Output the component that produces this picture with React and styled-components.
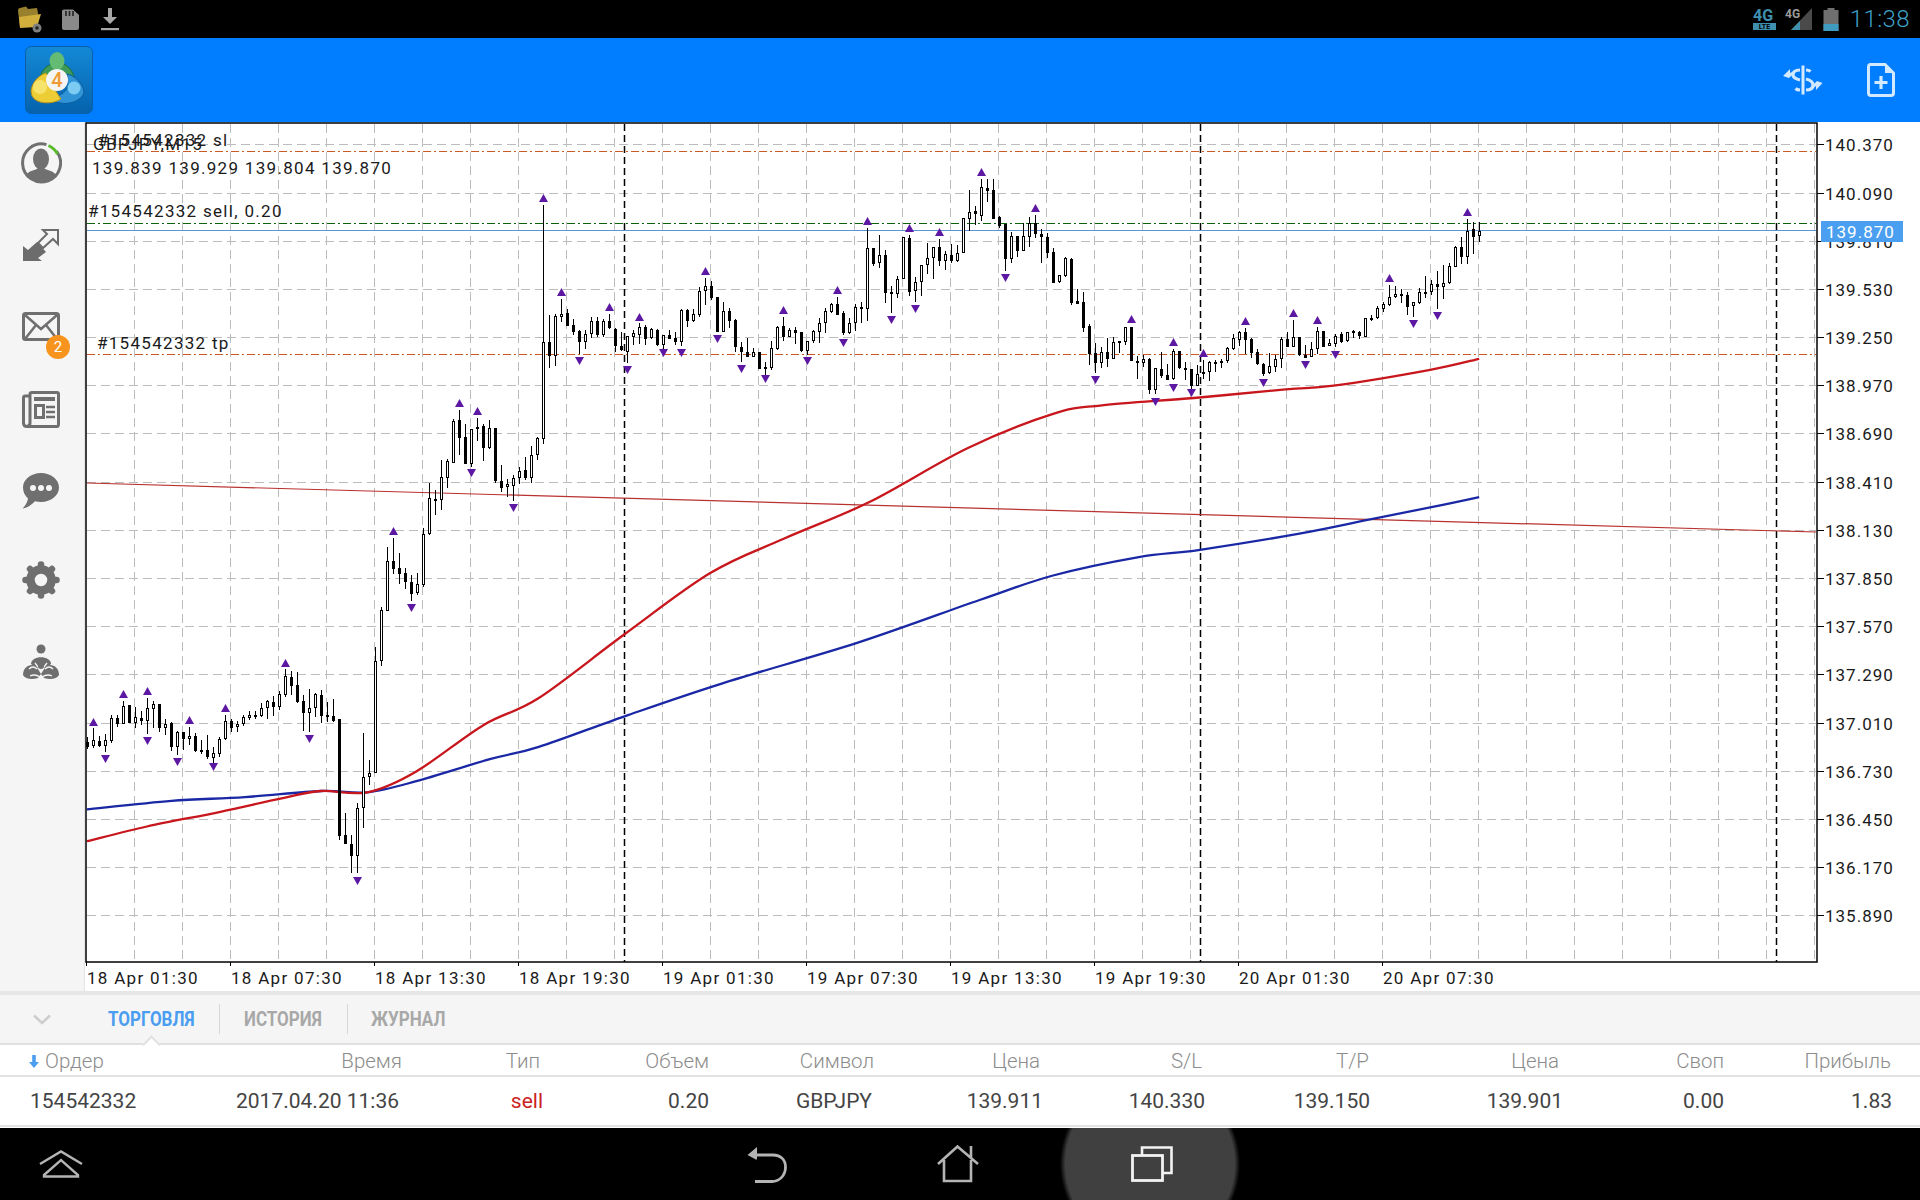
import React from "react";
import styled, { createGlobalStyle } from "styled-components";

// candles read off the chart: [black?, body top, body bottom, wick top, wick bottom]
// y values are kept in 1/3 px from a base line per group
const groups = [
  { from: 0, y0: 660, rows: [
    [1,247,262,230,268],[0,240,258,205,265],[1,243,258,228,262],[0,240,258,222,275],[0,175,243,165,250],[1,175,191,165,200],
    [0,138,191,123,191],[1,135,188,135,188],[0,172,188,140,205],[1,175,182,153,195],[0,145,182,113,222],[0,132,146,122,205],
    [1,132,205,132,215],[0,192,205,178,225],[1,190,260,185,272],[0,215,260,212,285],[1,216,236,216,270],[0,229,236,200,255],
    [1,228,273,220,276],[1,270,272,240,283],[1,270,291,225,297],[0,280,293,262,310],[0,237,281,232,290],[0,184,238,165,240],
    [1,184,203,176,215],[0,193,200,182,215],[0,172,193,165,198],[0,166,173,153,180],[1,166,170,152,177],[0,145,167,128,172],
    [0,124,145,120,177],[1,127,140,107,168],[0,102,140,92,150],[0,48,104,28,110],[1,52,77,33,106],[1,75,125,37,130],
    [1,123,160,105,212],[0,145,160,87,215],[0,102,143,100,172],[1,105,167,90,190],[1,165,168,125,185],[1,167,183,117,185],
    [1,178,527,178,540],[1,525,552,460,552],[1,552,587,525,638],[0,445,587,430,640],[0,352,443,220,503],[0,340,350,300,375],
  ]},
  { from: 48, y0: 390, rows: [
    [0,813,1149,772,1149],[0,660,812,652,828],[0,514,662,472,662],[1,513,537,445,552],[1,534,552,490,582],[1,550,576,535,597],
    [1,576,612,556,633],[0,583,610,550,615],[0,433,585,415,590],[0,325,432,280,435],[1,327,332,300,375],[0,262,329,210,360],
    [0,213,263,208,293],[0,94,218,87,218],[1,90,144,60,195],[1,141,221,102,221],[0,118,222,118,230],[0,112,118,85,152],
    [1,108,173,102,213],[0,114,174,90,178],[1,114,272,114,280],[1,273,293,225,305],[0,283,290,267,320],[0,265,287,255,332],
    [0,243,265,232,282],[1,240,264,202,270],[0,195,265,168,278],[0,144,194,142,210],
  ]},
  { from: 76, y0: 180, rows: [
    [0,485,776,75,792],[1,485,527,405,563],[0,408,527,403,558],[0,403,410,357,425],[1,400,437,388,437],[1,435,457,418,465],
    [1,453,485,450,522],[0,463,485,450,507],[0,423,463,412,475],[1,423,465,412,470],[0,423,465,418,472],[1,423,445,403,447],
    [1,447,498,445,515],[1,497,510,457,512],[0,469,515,469,548],[0,460,470,450,495],[0,441,464,430,492],[1,441,476,436,495],
    [0,447,474,445,478],[1,450,495,448,498],[0,466,495,464,510],[1,466,476,450,476],[1,475,485,457,495],[0,390,485,388,497],
    [1,391,422,388,440],[0,403,424,388,425],[0,333,405,320,410],[0,319,334,295,375],[1,319,353,303,360],[1,352,455,350,455],
    [0,394,455,366,455],[1,394,422,385,443],[1,420,500,418,515],[1,500,515,487,545],[1,515,530,475,530],[0,517,530,505,530],
    [1,517,566,517,566],[1,562,566,545,590],[0,505,565,483,570],[0,440,507,438,510],[1,438,472,410,483],[0,451,470,445,472],
    [1,451,458,442,492],[1,456,512,455,515],[0,482,512,482,525],[0,454,482,450,490],[0,430,455,415,490],
  ]},
  { from: 123, y0: 150, rows: [
    [0,484,518,475,548],[0,462,485,460,490],[1,463,495,442,495],[1,490,548,483,556],[0,520,548,503,552],[0,472,520,463,542],
    [1,472,478,455,518],[0,295,476,235,512],[1,295,342,295,348],[0,316,340,255,355],[1,316,428,300,458],[1,426,431,408,488],
    [0,388,431,378,443],[0,262,388,262,388],[1,265,425,255,437],[0,397,424,380,455],[0,346,397,345,437],[0,325,346,280,372],
    [0,292,325,290,387],[1,292,332,268,347],[0,313,334,303,360],[1,316,332,283,338],[0,308,332,285,335],[0,203,310,203,310],
    [0,187,206,120,242],[1,184,193,168,225],[0,112,197,87,213],[1,114,122,87,155],[1,120,206,88,206],[1,201,227,198,235],
    [1,223,326,223,362],[0,259,326,247,338],[1,259,302,257,320],[0,259,302,220,302],[0,220,260,200,290],[1,220,252,195,263],
    [1,253,262,238,338],[1,262,308,250,323],[1,306,398,295,398],[0,376,396,376,398],[0,324,378,322,380],[1,327,458,325,465],
    [1,454,461,418,461],[1,457,533,427,546],[1,527,612,523,644],[1,610,638,580,668],[0,607,638,592,653],[1,607,626,565,652],
    [0,577,626,560,626],[0,574,580,574,608],[0,532,575,530,585],[1,532,632,532,632],[1,633,637,617,687],[0,628,640,615,650],
    [1,627,720,625,733],[0,655,720,655,733],[1,657,677,605,685],[1,675,690,643,690],[0,603,687,597,690],[1,603,655,603,657],
    [1,655,659,636,690],[1,657,707,657,720],[0,672,707,645,707],[1,667,671,630,688],
  ]},
  { from: 187, y0: 290, rows: [
    [0,216,247,212,272],[1,215,218,210,247],[1,213,216,207,233],[0,174,213,172,218],[0,144,177,132,180],[0,127,149,122,168],
    [1,127,150,115,192],[1,147,188,145,204],[1,187,223,178,224],[1,222,252,220,258],[0,229,250,190,252],[0,207,230,195,245],
    [0,147,207,140,233],[1,148,170,125,170],[0,142,170,90,170],[1,142,196,140,198],[1,196,203,166,203],[0,178,200,155,200],
    [0,124,178,112,192],[1,124,170,124,170],[0,160,167,148,168],[0,137,161,133,172],[1,133,156,127,158],[0,127,154,125,155],
    [1,124,128,120,143],[1,126,138,123,146],[0,85,140,85,140],[0,83,89,75,92],[0,54,84,47,87],[0,42,56,37,65],
  ]},
  { from: 217, y0: 200, rows: [
    [0,291,316,255,318],[0,283,292,258,293],[1,283,287,268,308],[1,285,320,277,345],[0,307,317,305,350],[0,277,308,265,312],
    [1,277,279,228,293],[0,252,277,240,285],[1,253,260,212,327],[0,250,260,195,297],[0,199,250,190,252],[0,142,200,137,200],
    [1,142,170,110,192],[0,92,170,57,193],[1,88,112,65,162],[0,94,109,65,125],
  ]},
];

const candles = groups.flatMap((g) =>
  g.rows.map(([black, top, bot, wTop, wBot], n) => ({
    x: 87 + 6 * (g.from + n),
    black: !!black,
    top: Math.round(g.y0 + top / 3),
    bot: Math.round(g.y0 + bot / 3),
    wTop: Math.round(g.y0 + wTop / 3),
    wBot: Math.round(g.y0 + wBot / 3),
  }))
);

const upArrows = [[1,722],[6,694],[10,691],[17,720],[23,708],[33,663],[51,531],[62,403],[65,411],[76,198],[79,292],[87,307],[92,317],[103,271],[116,310],[125,290],[130,221],[137,228],[142,232],[149,172],[158,208],[174,319],[181,342],[186,353],[193,321],[201,313],[205,320],[217,278],[230,212]];
const downArrows = [[3,759],[10,741],[15,762],[21,767],[37,739],[45,881],[54,608],[64,473],[71,508],[82,361],[90,370],[96,353],[99,353],[105,339],[109,369],[113,379],[120,361],[126,343],[134,320],[138,309],[153,278],[168,380],[178,402],[181,388],[184,393],[196,383],[203,365],[208,355],[221,324],[225,316]];

// smooth line through points given in the shrunk picture's scale
const smoothPath = (pts) => {
  const p = pts.map(([x, y]) => [x * 1.2245, y * 1.2245]);
  let d = `M${p[0][0].toFixed(1)} ${p[0][1].toFixed(1)}`;
  for (let i = 0; i < p.length - 1; i++) {
    const a = p[i - 1] || p[i];
    const b = p[i];
    const c = p[i + 1];
    const e = p[i + 2] || c;
    const c1 = [b[0] + (c[0] - a[0]) / 6, b[1] + (c[1] - a[1]) / 6];
    const c2 = [c[0] - (e[0] - b[0]) / 6, c[1] - (e[1] - b[1]) / 6];
    d += ` C${c1[0].toFixed(1)} ${c1[1].toFixed(1)} ${c2[0].toFixed(1)} ${c2[1].toFixed(1)} ${c[0].toFixed(1)} ${c[1].toFixed(1)}`;
  }
  return d;
};
const redMa = smoothPath([[71,687],[120,675],[180,663],[230,652],[262,646],[300,647],[340,630],[395,592],[440,570],[510,518],[580,468],[640,440],[710,410],[790,366],[860,338],[900,331],[975,325],[1050,318],[1089,315],[1168,302],[1208,293]]);
const blueMa = smoothPath([[71,661],[140,654],[200,651],[262,646],[300,647],[340,638],[400,620],[440,610],[510,585],[590,558],[700,525],[800,490],[860,470],[930,455],[980,449],[1060,436],[1120,424],[1170,414],[1208,406]]);

const prices = ["140.370","140.090","139.810","139.530","139.250","138.970","138.690","138.410","138.130","137.850","137.570","137.290","137.010","136.730","136.450","136.170","135.890"];
const times = ["18 Apr 01:30","18 Apr 07:30","18 Apr 13:30","18 Apr 19:30","19 Apr 01:30","19 Apr 07:30","19 Apr 13:30","19 Apr 19:30","20 Apr 01:30","20 Apr 07:30"];
const gridXs = Array.from({ length: 36 }, (_, i) => 134.5 + 48 * i);
const gridY = (i) => Math.round(144.4 + 48.18 * i) + 0.5;

const columns = [
  { title: "Время", value: "2017.04.20 11:36", w: 222, vp: 3 },
  { title: "Тип", value: "sell", w: 141, hp: 3, sell: true },
  { title: "Объем", value: "0.20", w: 166 },
  { title: "Символ", value: "GBPJPY", w: 165, vp: 2 },
  { title: "Цена", value: "139.911", w: 169, hp: 3 },
  { title: "S/L", value: "140.330", w: 162, hp: 3 },
  { title: "T/P", value: "139.150", w: 165, hp: 1 },
  { title: "Цена", value: "139.901", w: 193, hp: 4 },
  { title: "Своп", value: "0.00", w: 161 },
  { title: "Прибыль", value: "1.83", w: 168, hp: 1 },
];
const tableGrid = `180px ${columns.map((c) => c.w + "px").join(" ")}`;

const GlobalStyle = createGlobalStyle`
  html, body { margin: 0; padding: 0; background: #fff; overflow: hidden; }
  * { box-sizing: border-box; }
  body { font-family: Roboto, "Liberation Sans", sans-serif; }
`;

const Screen = styled.div`
  width: 1920px;
  height: 1200px;
  display: flex;
  flex-direction: column;
`;

const StatusBar = styled.div`
  height: 38px;
  background: #000;
  display: flex;
  align-items: center;
  padding: 0 10px 0 17px;
`;
const StatusLeft = styled.div`
  display: flex;
  align-items: center;
  gap: 19px;
`;
const StatusRight = styled.div`
  margin-left: auto;
  display: flex;
  align-items: center;
  gap: 8px;
`;
const Clock = styled.span`
  font-size: 24px;
  font-weight: 300;
  color: #3f9fc4;
  margin-left: 3px;
  letter-spacing: 0.4px;
`;

const Toolbar = styled.div`
  height: 84px;
  background: #007eff;
  display: flex;
  align-items: center;
  padding: 0 25px;
`;
const ToolbarActions = styled.div`
  margin-left: auto;
  display: flex;
  align-items: center;
  gap: 44px;
`;

const Main = styled.div`
  height: 869px;
  display: flex;
`;
const Sidebar = styled.div`
  width: 85px;
  background: #f5f5f5;
  border-right: 1px solid #e4e4e4;
  display: flex;
  flex-direction: column;
`;
const SideSlot = styled.div`
  position: relative;
  height: 82px;
  margin-top: ${(p) => p.$mt || 0}px;
  display: flex;
  align-items: center;
  justify-content: center;
  padding-right: 2px;
`;
const Badge = styled.span`
  position: absolute;
  left: 46px;
  top: 49px;
  width: 24px;
  height: 24px;
  border-radius: 50%;
  background: #f7941d;
  color: #fff;
  font-size: 15px;
  display: flex;
  align-items: center;
  justify-content: center;
`;

const ChartSvg = styled.svg`
  display: block;
  width: 1835px;
  height: 869px;
  background: #fff;
`;
const ChartText = styled.text`
  font-family: Roboto, "Liberation Sans", sans-serif;
  font-size: 17px;
  letter-spacing: ${(p) => p.$ls || 1.3}px;
  fill: ${(p) => p.$fill || "#1a1a1a"};
`;

const TabBar = styled.div`
  position: relative;
  height: 54px;
  background: #f5f5f5;
  border-top: 4px solid #e6e6e6;
  border-bottom: 2px solid #e0e0e0;
  display: flex;
  align-items: center;
`;
const Chevron = styled.div`
  width: 108px;
  padding-left: 33px;
  display: flex;
  align-items: center;
`;
const Tab = styled.div`
  width: ${(p) => p.$w}px;
  height: 30px;
  margin-left: ${(p) => p.$ml || 0}px;
  display: flex;
  align-items: center;
  border-right: ${(p) => (p.$sep ? "1px solid #d8d8d8" : "none")};
`;
const TabLabel = styled.span`
  display: inline-block;
  font-size: 20px;
  font-weight: 700;
  white-space: nowrap;
  transform: scaleX(0.85);
  transform-origin: left center;
  color: ${(p) => (p.$active ? "#4a9df0" : "#a8a8a8")};
`;
const Notch = styled.span`
  position: absolute;
  left: 145px;
  bottom: -8px;
  width: 13px;
  height: 13px;
  background: #fff;
  border-top: 2px solid #e0e0e0;
  border-left: 2px solid #e0e0e0;
  transform: rotate(45deg);
`;

const TableRow = styled.div`
  display: grid;
  grid-template-columns: ${tableGrid};
  align-items: center;
  background: #fff;
  height: ${(p) => p.$h}px;
  border-bottom: 2px solid #e2e2e2;
`;
const HeadCell = styled.div`
  font-size: 20.5px;
  font-weight: 300;
  color: #8c8c8c;
  text-align: right;
  white-space: nowrap;
  padding-top: 2px;
  padding-right: ${(p) => p.$pr || 0}px;
`;
const OrderHead = styled(HeadCell)`
  text-align: left;
  padding-left: 29px;
  display: flex;
  align-items: center;
  gap: 6px;
`;
const Cell = styled.div`
  font-size: 21px;
  color: ${(p) => (p.$sell ? "#cc2222" : "#444")};
  text-align: right;
  white-space: nowrap;
  padding-right: ${(p) => p.$pr || 0}px;
`;
const OrderCell = styled(Cell)`
  text-align: left;
  padding-left: 30px;
`;

const NavBar = styled.div`
  margin-top: 1px;
  height: 72px;
  display: flex;
  align-items: center;
  background: radial-gradient(circle 90px at 1150px 36px, #404040 94%, #000 100%);
`;
const NavButton = styled.div`
  margin-left: ${(p) => p.$ml}px;
  display: flex;
  align-items: center;
`;

const Logo = () => (
  <svg width="68" height="68" viewBox="0 0 68 68">
    <defs>
      <linearGradient id="lg" x1="0" y1="0" x2="0" y2="1">
        <stop offset="0" stopColor="#1489d6" />
        <stop offset="1" stopColor="#0562ad" />
      </linearGradient>
    </defs>
    <rect x="0.5" y="0.5" width="67" height="67" rx="6" fill="url(#lg)" stroke="#0a5fa8" />
    <path d="M15 33 C16 23 24 17 33 17 C41 17 47 23 49 31 L37 37 L24 37 Z" fill="#3d9a58" stroke="#1f6e3a" strokeWidth="1" />
    <ellipse cx="32" cy="15" rx="7.5" ry="9" fill="#63bb74" />
    <path d="M42 28 C52 30 59 40 59 47 C56 55 44 59 35 57 C29 56 26 53 27 50 C34 51 40 47 43 41 Z" fill="#2f93d6" stroke="#0b5c9c" strokeWidth="1" />
    <circle cx="49" cy="42" r="6.5" fill="#7ccbf2" />
    <path d="M6 45 C7 36 14 29 21 27 C24 32 27 40 36 53 C27 59 11 58 7 50 Z" fill="#eccd35" stroke="#b8941a" strokeWidth="1" />
    <circle cx="15" cy="41" r="7" fill="#f6e36c" />
    <circle cx="32" cy="34" r="11" fill="#f4f4f4" />
    <text x="32" y="41" textAnchor="middle" fontFamily="Roboto, sans-serif" fontSize="20" fontWeight="500" fill="#ee9b37">4</text>
  </svg>
);

const Gear = () => (
  <svg width="38" height="38" viewBox="0 0 38 38">
    <circle cx="19" cy="19" r="10.5" fill="none" stroke="#6f6f6f" strokeWidth="8.5" />
    {[0, 45, 90, 135, 180, 225, 270, 315].map((a) => (
      <line key={a} x1="19" y1="5" x2="19" y2="3.5" stroke="#6f6f6f" strokeWidth="6.5" strokeLinecap="round" transform={`rotate(${a} 19 19)`} />
    ))}
  </svg>
);

const sideIcons = [
  <svg key="p" width="42" height="42" viewBox="0 0 42 42">
    <path d="M26.5 2.6 A19 19 0 1 0 36.5 9.2" fill="none" stroke="#707070" strokeWidth="3" />
    <path d="M28.5 3.5 A19 19 0 0 1 37.5 12" fill="none" stroke="#58bb2c" strokeWidth="3" />
    <ellipse cx="21" cy="17" rx="8" ry="10.5" fill="#707070" />
    <path d="M6 33 C11 27 15 29 18 26 L24 26 C27 29 31 27 36 33 C28 42 14 42 6 33 Z" fill="#707070" />
  </svg>,
  <svg key="a" width="38" height="34" viewBox="0 0 38 34">
    <path d="M1 33 L1 18 L6 22 L15 14 L24 24 L16 30 L20 33 Z" fill="#6c6c6c" />
    <path d="M36 2 L36 16 L31 11 L21 20 L16 15 L25 6 L21 2 Z" fill="none" stroke="#6c6c6c" strokeWidth="2" />
  </svg>,
  <svg key="m" width="38" height="30" viewBox="0 0 38 30">
    <rect x="1.5" y="1.5" width="35" height="26" rx="2" fill="none" stroke="#6f6f6f" strokeWidth="3" />
    <path d="M3 3 L19 17 L35 3 M3 27 L14 13 M35 27 L24 13" fill="none" stroke="#6f6f6f" strokeWidth="2.5" />
  </svg>,
  <svg key="n" width="38" height="37" viewBox="0 0 38 37">
    <path d="M7 5 L3 5 Q1.5 5 1.5 7 L1.5 32 Q1.5 35.5 5 35.5 L35 35.5 Q36.5 35.5 36.5 33 L36.5 3 Q36.5 1.5 35 1.5 L10 1.5 Q8 1.5 8 3 L8 32 Q8 35 5 35.5" fill="none" stroke="#6f6f6f" strokeWidth="3" />
    <rect x="12" y="6" width="21" height="4" fill="#6f6f6f" />
    <rect x="13.5" y="14.5" width="8" height="12" fill="none" stroke="#6f6f6f" strokeWidth="3" />
    <path d="M24 16 H33 M24 21 H33 M24 26 H33" stroke="#6f6f6f" strokeWidth="2.6" />
  </svg>,
  <svg key="c" width="38" height="38" viewBox="0 0 38 38">
    <path d="M19 1 C29 1 37 7.5 37 15.5 C37 23.5 29 30 19 30 C17 30 15 29.8 13 29.2 C9 33 5 36 0.5 36.5 C3.5 33.5 5.5 30 6 26.5 C3 24 1 20 1 15.5 C1 7.5 9 1 19 1 Z" fill="#6f6f6f" />
    <circle cx="11" cy="16" r="3" fill="#f5f5f5" />
    <circle cx="19" cy="16" r="3" fill="#f5f5f5" />
    <circle cx="27" cy="16" r="3" fill="#f5f5f5" />
  </svg>,
  <Gear key="g" />,
  <svg key="t" width="38" height="36" viewBox="0 0 38 36">
    <circle cx="19" cy="5" r="4.5" fill="#6f6f6f" />
    <path d="M9 20 C9 11 29 11 29 20 L24 24 L14 24 Z" fill="#6f6f6f" />
    <path d="M1 31 C1 23 8 19 14 22 L19 30 L16 34 C10 36 3 35 1 31 Z" fill="#6f6f6f" />
    <path d="M37 31 C37 23 30 19 24 22 L19 30 L22 34 C28 36 35 35 37 31 Z" fill="#6f6f6f" />
    <path d="M7 25 C10 22 13 23 15 25 M31 25 C28 22 25 23 23 25 M13 19 L19 27 L25 19 M8 32 C12 30 15 31 18 33 M30 32 C26 30 23 31 20 33" fill="none" stroke="#f5f5f5" strokeWidth="1.3" />
    <circle cx="19" cy="22" r="3" fill="#6f6f6f" />
  </svg>,
];

const Chart = () => (
  <ChartSvg viewBox="85 122 1835 869">
    {/* grid */}
    <g stroke="#bcbcbc" strokeWidth="1" strokeDasharray="9 5">
      {gridXs.map((x) => (
        <line key={x} x1={x} y1="124" x2={x} y2="962" />
      ))}
      {prices.map((p, i) => (
        <line key={p} x1="87" y1={gridY(i)} x2="1816" y2={gridY(i)} />
      ))}
    </g>
    <g stroke="#000" strokeWidth="1.5" strokeDasharray="7 4">
      {[624.5, 1200.5, 1776.5].map((x) => (
        <line key={x} x1={x} y1="124" x2={x} y2="962" />
      ))}
    </g>

    {/* order and bid levels */}
    <g strokeWidth="1" strokeDasharray="8 3 2 3" fill="none">
      <line x1="87" y1="151.5" x2="1816" y2="151.5" stroke="#cc5a22" />
      <line x1="87" y1="354.5" x2="1816" y2="354.5" stroke="#cc5a22" />
      <line x1="87" y1="223.5" x2="1816" y2="223.5" stroke="#0b640b" />
    </g>
    <line x1="87" y1="230.5" x2="1816" y2="230.5" stroke="#5b93d6" strokeWidth="1.2" />
    <line x1="87" y1="483" x2="1816" y2="532" stroke="#b8322f" strokeWidth="1.2" />

    {/* moving averages */}
    <path d={blueMa} fill="none" stroke="#1a28a5" strokeWidth="2.3" />
    <path d={redMa} fill="none" stroke="#c8161d" strokeWidth="2.3" />

    {/* candles */}
    <g shapeRendering="crispEdges">
      {candles.map((c) => (
        <g key={c.x}>
          <rect x={c.x} y={c.wTop} width="1" height={Math.max(c.wBot - c.wTop, 1)} fill="#000" />
          <rect x={c.x - 1} y={c.top} width="3" height={Math.max(c.bot - c.top, 2)} fill="#000" />
          {!c.black && c.bot - c.top > 2 && (
            <rect x={c.x} y={c.top + 1} width="1" height={c.bot - c.top - 2} fill="#fff" />
          )}
        </g>
      ))}
    </g>

    {/* fractals */}
    <g fill="#5c17a3">
      {upArrows.map(([i, y]) => {
        const x = 87.5 + 6 * i;
        return <polygon key={i} points={`${x - 4.5},${y + 4} ${x + 4.5},${y + 4} ${x},${y - 4}`} />;
      })}
      {downArrows.map(([i, y]) => {
        const x = 87.5 + 6 * i;
        return <polygon key={i} points={`${x - 4.5},${y - 4} ${x + 4.5},${y - 4} ${x},${y + 4}`} />;
      })}
    </g>

    {/* frame and axis ticks */}
    <rect x="86" y="123" width="1731" height="839" fill="none" stroke="#000" strokeWidth="1.5" />
    {prices.map((p, i) => (
      <line key={p} x1="1817" y1={gridY(i)} x2="1824" y2={gridY(i)} stroke="#000" />
    ))}
    {times.map((t, i) => (
      <line key={t} x1={86.5 + 144 * i} y1="962" x2={86.5 + 144 * i} y2="966" stroke="#000" />
    ))}

    {prices.map((p, i) => (
      <ChartText key={p} x="1825" y={gridY(i) + 6.5} $ls={1}>{p}</ChartText>
    ))}
    {times.map((t, i) => (
      <ChartText key={t} x={87 + 144 * i} y="984">{t}</ChartText>
    ))}

    <rect x="1821" y="221" width="82" height="21" fill="#4b9ff0" />
    <ChartText x="1826" y="237.5" $ls={1} $fill="#fff">139.870</ChartText>

    <ChartText x="98" y="146">#154542332 sl</ChartText>
    <ChartText x="93" y="150">GBPJPY,M15</ChartText>
    <ChartText x="92" y="174">139.839 139.929 139.804 139.870</ChartText>
    <ChartText x="88" y="217">#154542332 sell, 0.20</ChartText>
    <ChartText x="97" y="349">#154542332 tp</ChartText>
  </ChartSvg>
);

export default function App() {
  return (
    <Screen>
      <GlobalStyle />
      <StatusBar>
        <StatusLeft>
          <svg width="25" height="27" viewBox="0 0 25 27">
            <path d="M1 5 Q1 2 3 2 L9 0.5 L11 3 L20 2 L21 7 L20 20 L3 21 Z" fill="#98802c" />
            <path d="M2 11 L24 8 L20 21 L3 22 Z" fill="#d2ae3c" />
            <circle cx="20" cy="22" r="4.5" fill="#808080" />
            <circle cx="20" cy="22" r="1.8" fill="#222" />
          </svg>
          <svg width="18" height="21" viewBox="0 0 18 21">
            <path d="M1 2 Q1 0.5 3 0.5 L12 0.5 L18 6 L18 19 Q18 21 16 21 L3 21 Q1 21 1 19 Z" fill="#8a8a8a" />
            <path d="M5 2 V7 M8.5 2 V7 M12 2 V7" stroke="#222" strokeWidth="1.6" />
          </svg>
          <svg width="18" height="24" viewBox="0 0 18 24" style={{ marginLeft: 3 }}>
            <path d="M7 1 H11 V10 H16 L9 17 L2 10 H7 Z" fill="#a8a8a8" />
            <rect x="0" y="21" width="18" height="2.2" fill="#a8a8a8" />
          </svg>
        </StatusLeft>
        <StatusRight>
          <svg width="24" height="24" viewBox="0 0 24 24">
            <text x="0" y="14" fontFamily="Roboto, sans-serif" fontWeight="700" fontSize="16" fill="#3f8fae">4G</text>
            <rect x="0" y="16" width="23" height="7" fill="#3f8fae" />
            <text x="11.5" y="22" textAnchor="middle" fontFamily="Roboto, sans-serif" fontWeight="700" fontSize="7" fill="#000">LTE</text>
          </svg>
          <svg width="28" height="24" viewBox="0 0 28 24">
            <text x="0" y="11" fontFamily="Roboto, sans-serif" fontWeight="700" fontSize="12" fill="#9a9a9a">4G</text>
            <polygon points="6,23 27,23 27,1" fill="#4a4a4a" />
            <polygon points="6,23 15,23 15,14" fill="#3f8fae" />
          </svg>
          <svg width="16" height="23" viewBox="0 0 16 23" style={{ marginLeft: 2 }}>
            <rect x="4.5" y="0" width="7" height="2" fill="#6f6f6f" />
            <rect x="0.5" y="2" width="15" height="21" fill="#6f6f6f" />
            <rect x="0.5" y="16" width="15" height="7" fill="#3f9cc0" />
          </svg>
          <Clock>11:38</Clock>
        </StatusRight>
      </StatusBar>

      <Toolbar>
        <Logo />
        <ToolbarActions>
          <svg width="40" height="30" viewBox="0 0 40 30">
            <path d="M20 0.5 V29.5" stroke="#d3e9ff" strokeWidth="3" />
            <path d="M17 5 C12 5 10 7 10 10 C10 13 13 14 17 15 M23 14 C27 15 30 17 30 20 C30 24 27 25 23 25 M23 5 C25 5 26.5 5.5 27.5 6.5 M17 25 C15 25 13.5 24.5 12.5 23.5" fill="none" stroke="#d3e9ff" strokeWidth="3.2" />
            <path d="M0 11 L7 4 L7 8 L11 6 L9 10 L6 13 Z" fill="#d3e9ff" />
            <path d="M39.5 18 L33 25 L33 21 L29 24 L31 19 L34 16 Z" fill="#d3e9ff" />
          </svg>
          <svg width="28" height="34" viewBox="0 0 28 34">
            <path d="M3.5 1.5 H18 L26.5 10 V30 Q26.5 32.5 24 32.5 H4 Q1.5 32.5 1.5 30 V4 Q1.5 1.5 3.5 1.5 Z" fill="none" stroke="#d3e9ff" strokeWidth="3" />
            <path d="M18 1.5 V10 H26.5 Z" fill="#d3e9ff" />
            <path d="M14 13 V26 M7.5 19.5 H20.5" stroke="#d3e9ff" strokeWidth="3.2" />
          </svg>
        </ToolbarActions>
      </Toolbar>

      <Main>
        <Sidebar>
          {sideIcons.map((icon, i) => (
            <SideSlot key={i} $mt={i === 5 ? 7 : 0}>
              {icon}
              {i === 2 && <Badge>2</Badge>}
            </SideSlot>
          ))}
        </Sidebar>
        <Chart />
      </Main>

      <TabBar>
        <Chevron>
          <svg width="18" height="11" viewBox="0 0 18 11">
            <path d="M1 1.5 L9 9 L17 1.5" fill="none" stroke="#cdcdcd" strokeWidth="2.6" />
          </svg>
        </Chevron>
        <Tab $w={112} $sep>
          <TabLabel $active>ТОРГОВЛЯ</TabLabel>
        </Tab>
        <Tab $w={104} $ml={24} $sep>
          <TabLabel>ИСТОРИЯ</TabLabel>
        </Tab>
        <Tab $w={100} $ml={23}>
          <TabLabel>ЖУРНАЛ</TabLabel>
        </Tab>
        <Notch />
      </TabBar>

      <TableRow $h={32}>
        <OrderHead>
          <svg width="10" height="13" viewBox="0 0 10 13">
            <path d="M3.2 0 H6.8 V7 H10 L5 13 L0 7 H3.2 Z" fill="#4a9df0" />
          </svg>
          Ордер
        </OrderHead>
        {columns.map((c, i) => (
          <HeadCell key={i} $pr={c.hp}>{c.title}</HeadCell>
        ))}
      </TableRow>
      <TableRow $h={50}>
        <OrderCell>154542332</OrderCell>
        {columns.map((c, i) => (
          <Cell key={i} $sell={c.sell} $pr={c.vp}>{c.value}</Cell>
        ))}
      </TableRow>

      <NavBar>
        <NavButton $ml={39}>
          <svg width="44" height="28" viewBox="0 0 44 28">
            <path d="M1 14 L22 1.5 L43 14 M5 25 L22 10 L39 25 L39 26.5 L5 26.5 Z" fill="none" stroke="#b4b4b4" strokeWidth="2.4" />
          </svg>
        </NavButton>
        <NavButton $ml={664}>
          <svg width="40" height="37" viewBox="0 0 40 37">
            <path d="M0.5 9 L10 1 L10 6 L10 12 Q10 15 8 13 Z" fill="#b4b4b4" />
            <path d="M8 9 H26 C34 9 38.5 14 38.5 21 C38.5 30 32 35.5 25 35.5 H8" fill="none" stroke="#b4b4b4" strokeWidth="2.8" />
          </svg>
        </NavButton>
        <NavButton $ml={150}>
          <svg width="42" height="38" viewBox="0 0 42 38">
            <path d="M1 19 L20.5 1.5 L41 19 M34 13 V1 M7 15 V36 H34 V15" fill="none" stroke="#b4b4b4" strokeWidth="2.6" />
          </svg>
        </NavButton>
        <NavButton $ml={152}>
          <svg width="42" height="36" viewBox="0 0 42 36">
            <path d="M11 9 V1.5 H40.5 V27 H32" fill="none" stroke="#f2f2f2" strokeWidth="2.6" />
            <rect x="1.5" y="9.5" width="30" height="25" fill="none" stroke="#f2f2f2" strokeWidth="2.8" />
          </svg>
        </NavButton>
      </NavBar>
    </Screen>
  );
}
